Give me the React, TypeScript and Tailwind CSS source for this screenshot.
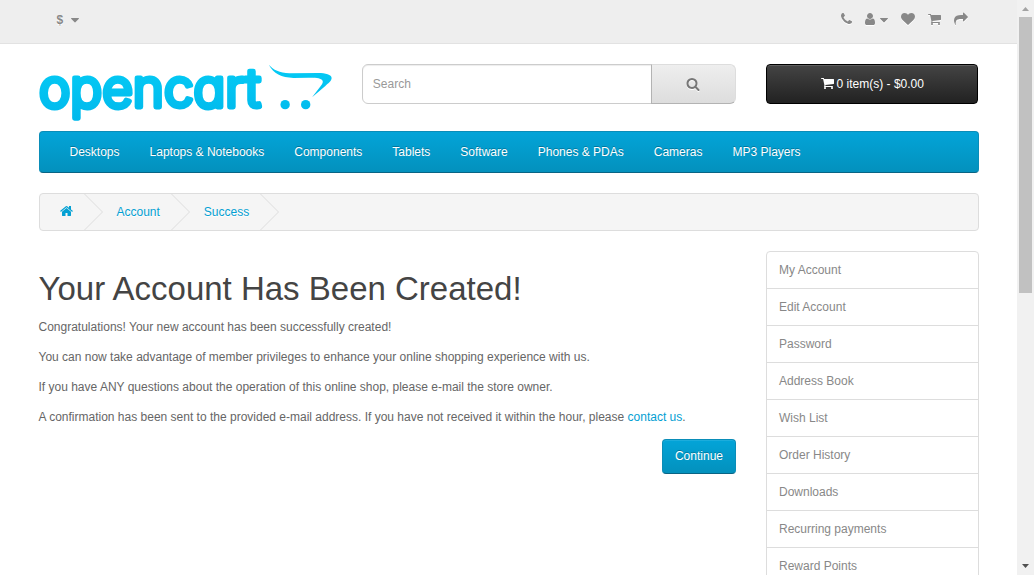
import type { ReactNode } from "react";

type IconProps = { d: string; viewBox: string; className: string };

function Icon({ d, viewBox, className }: IconProps) {
  return (
    <svg viewBox={viewBox} className={`fill-current ${className}`} aria-hidden="true">
      <path d={d} />
    </svg>
  );
}

const paths = {
  phone:
    "M1600 1240q0 27-10 70.5t-21 68.5q-21 50-122 106-94 51-186 51-27 0-53-3.5t-57.5-12.5-47-14.5-55.5-20.5-49-18q-98-35-175-83-127-79-264-216t-216-264q-48-77-83-175-3-9-18-49t-20.5-55.5-14.5-47-12.5-57.5-3.5-53q0-92 51-186 56-101 106-122 25-11 68.5-21t70.5-10q14 0 21 3 18 6 53 76 11 19 30 54t35 63.5 31 53.5q3 4 17.5 25t21.5 35.5 7 28.5q0 20-28.5 50t-62 55-62 53-28.5 46q0 9 5 22.5t8.5 20.5 14 24 11.5 19q76 137 174 235t235 174q2 1 19 11.5t24 14 20.5 8.5 22.5 5q18 0 46-28.5t53-62 55-62 50-28.5q14 0 28.5 7t35.5 21.5 25 17.5q25 15 53.5 31t63.5 35 54 30q70 35 76 53 3 7 3 21z",
  user: "M1536 1399q0 109-62.5 187t-150.5 78h-854q-88 0-150.5-78t-62.5-187q0-85 8.5-160.5t31.5-152 58.5-131 94-89 134.5-34.5q131 128 313 128t313-128q76 0 134.5 34.5t94 89 58.5 131 31.5 152 8.5 160.5zm-256-887q0 159-112.5 271.5t-271.5 112.5-271.5-112.5-112.5-271.5 112.5-271.5 271.5-112.5 271.5 112.5 112.5 271.5z",
  caret:
    "M1408 704q0 26-19 45l-448 448q-19 19-45 19t-45-19l-448-448q-19-19-19-45t19-45 45-19h896q26 0 45 19t19 45z",
  heart:
    "M896 1664q-26 0-44-18l-624-602q-10-8-27.5-26t-55.5-65.5-68-97.5-53.5-121-23.5-138q0-220 127-344t351-124q62 0 126.5 21.5t120 58 95.5 68.5 76 68q36-36 76-68t95.5-68.5 120-58 126.5-21.5q224 0 351 124t127 344q0 221-229 450l-623 600q-18 18-44 18z",
  cart: "M704 1536q0 52-38 90t-90 38-90-38-38-90 38-90 90-38 90 38 38 90zm896 0q0 52-38 90t-90 38-90-38-38-90 38-90 90-38 90 38 38 90zm128-1088v512q0 24-16.5 42.5t-40.5 21.5l-1044 122q13 60 13 70 0 16-24 64h920q26 0 45 19t19 45-19 45-45 19h-1024q-26 0-45-19t-19-45q0-11 8-31.5t16-36 21.5-40 15.5-29.5l-177-823h-204q-26 0-45-19t-19-45 19-45 45-19h256q16 0 28.5 6.5t19.5 15.5 13 24.5 8 26 5.5 29.5 4.5 26h1201q26 0 45 19t19 45z",
  share:
    "M1792 640q0 26-19 45l-512 512q-19 19-45 19t-45-19-19-45v-256h-224q-98 0-175.5 6t-154 21.5-133 42.5-105.5 69.5-80 101-48.5 138.5-17.5 181q0 55 5 123 0 6 2.5 23.5t2.5 26.5q0 15-8.5 25t-23.5 10q-16 0-28-17-7-9-13-22t-13.5-30-10.5-24q-127-285-127-451 0-199 53-333 162-403 875-403h224v-256q0-26 19-45t45-19 45 19l512 512q19 19 19 45z",
  search:
    "M1216 832q0-185-131.5-316.5t-316.5-131.5-316.5 131.5-131.5 316.5 131.5 316.5 316.5 131.5 316.5-131.5 131.5-316.5zm512 832q0 52-38 90t-90 38q-54 0-90-38l-343-342q-179 124-399 124-143 0-273.5-55.5t-225-150-150-225-55.5-273.5 55.5-273.5 150-225 225-150 273.5-55.5 273.5 55.5 225 150 150 225 55.5 273.5q0 220-124 399l343 343q37 37 37 90z",
  home: "M1472 992v480q0 26-19 45t-45 19h-384v-384h-256v384h-384q-26 0-45-19t-19-45v-480q0-1 .5-3t.5-3l575-474 575 474q1 2 1 6zm223-69l-62 74q-8 9-21 11h-3q-13 0-21-7l-692-577-692 577q-12 8-24 7-13-2-21-11l-62-74q-8-10-7-23.5t11-21.5l719-599q32-26 76-26t76 26l244 204v-195q0-14 9-23t23-9h192q14 0 23 9t9 23v408l219 182q10 8 11 21.5t-7 23.5z",
};

const categories = [
  "Desktops",
  "Laptops & Notebooks",
  "Components",
  "Tablets",
  "Software",
  "Phones & PDAs",
  "Cameras",
  "MP3 Players",
];

const accountLinks = [
  "My Account",
  "Edit Account",
  "Password",
  "Address Book",
  "Wish List",
  "Order History",
  "Downloads",
  "Recurring payments",
  "Reward Points",
];

function Container({ children, className = "" }: { children: ReactNode; className?: string }) {
  return <div className={`mx-auto w-full max-w-[970px] px-[15px] ${className}`}>{children}</div>;
}

function Logo() {
  return (
    <svg
      viewBox="0 0 294 58"
      className="block h-[58px] w-full max-w-[294px] overflow-visible"
      role="img"
      aria-label="opencart"
    >
      <defs>
        <linearGradient id="logo-fill" x1="0" y1="0" x2="0" y2="58" gradientUnits="userSpaceOnUse">
          <stop offset="0" stopColor="#05cbf5" />
          <stop offset="1" stopColor="#00b8ec" />
        </linearGradient>
      </defs>
      <g fill="url(#logo-fill)">
        <text
          x="0"
          y="43"
          stroke="url(#logo-fill)"
          strokeWidth="5"
          strokeLinejoin="round"
          className="font-['Inter',sans-serif] text-[53px] font-light [font-feature-settings:'cv11'] [font-optical-sizing:none]"
        >
          opencart
        </text>
        <path d="M230.3 .7C235 6 241 8.700 251 9.200L280 9C287 9 293.300 10.500 293.300 14C293.300 17 289.500 19.500 287 22L273.700 33.300L282 22.500C284 20 285.500 17.500 283.500 15.700C281.500 13.900 277 13.700 270 13.700L255 13.900C243 13.500 235 9.500 230.300 .7Z" />
        <circle cx="246.700" cy="40.700" r="4.700" />
        <circle cx="267.300" cy="40.700" r="4.700" />
      </g>
    </svg>
  );
}

function Chevron() {
  return (
    <svg viewBox="0 0 19 36" className="ml-[11px] mr-[14px] h-9 w-[19px] fill-none stroke-[#ddd]" aria-hidden="true">
      <path d="M.5 0L18.500 18L.5 36" />
    </svg>
  );
}

export default function App() {
  return (
    <div className="flex h-screen overflow-hidden bg-white font-['Liberation_Sans',Arial,sans-serif] text-[12px] leading-5 text-[#666]">
      <div className="min-w-0 flex-1 overflow-hidden">
        <nav className="mb-5 border-b border-[#e2e2e2] bg-[#eee]" aria-label="Top">
          <Container className="flex h-[43px] items-center justify-between pb-1 text-[#888]">
            <button className="ml-[18px] flex items-center gap-2 font-bold [text-shadow:0_1px_0_#fff]">
              <span>$</span>
              <Icon d={paths.caret} viewBox="384 0 1024 1792" className="h-[14px] w-2" />
            </button>
            <div className="mr-[11px] flex items-center gap-[13px] pb-[2px] [filter:drop-shadow(0_1px_0_#fff)]">
              <a href="#contact" aria-label="Contact">
                <Icon d={paths.phone} viewBox="192 0 1408 1792" className="h-[14px] w-[11px]" />
              </a>
              <button className="flex items-center gap-[5px]" aria-label="My Account">
                <Icon d={paths.user} viewBox="256 0 1280 1792" className="h-[14px] w-[10px]" />
                <Icon d={paths.caret} viewBox="384 0 1024 1792" className="mt-[2px] h-[14px] w-2" />
              </button>
              <a href="#wishlist" aria-label="Wish List">
                <Icon d={paths.heart} viewBox="0 0 1792 1792" className="size-[14px]" />
              </a>
              <a href="#cart" aria-label="Shopping Cart">
                <Icon d={paths.cart} viewBox="64 0 1664 1792" className="h-[14px] w-[13px]" />
              </a>
              <a href="#checkout" aria-label="Checkout">
                <Icon d={paths.share} viewBox="0 0 1792 1792" className="size-[14px]" />
              </a>
            </div>
          </Container>
        </nav>

        <Container>
          <header className="mb-[9px] grid grid-cols-12 items-start gap-x-[30px]">
            <a href="#home" className="col-span-4">
              <Logo />
            </a>
            <form className="col-span-5 flex h-10" onSubmit={(e) => e.preventDefault()}>
              <input
                type="text"
                aria-label="Search"
                placeholder="Search"
                className="min-w-0 flex-1 rounded-l-md border border-[#ccc] px-[10px] text-[12px] text-[#555] shadow-[inset_0_1px_1px_rgba(0,0,0,0.075)] outline-none placeholder:text-[#999]"
              />
              <button
                aria-label="Submit search"
                className="-ml-px flex w-[85px] items-center justify-center rounded-r-md border border-[#ddd] border-b-[#b3b3b3] border-l-[#b3b3b3] bg-linear-to-b from-[#eee] to-[#ddd] text-[#777]"
              >
                <Icon d={paths.search} viewBox="0 0 1792 1792" className="size-[14px] [filter:drop-shadow(0_1px_0_#fff)]" />
              </button>
            </form>
            <button className="col-span-3 flex h-10 items-center justify-center gap-[3px] rounded border border-black bg-linear-to-b from-[#444] to-[#222] text-white shadow-[inset_0_1px_0_rgba(255,255,255,0.15)]">
              <Icon d={paths.cart} viewBox="64 0 1664 1792" className="mb-[2px] h-[14px] w-[13px]" />
              <span>0 item(s) - $0.00</span>
            </button>
          </header>

          <nav
            aria-label="Categories"
            className="mb-5 flex rounded border border-[#0a8db8] border-b-[#096484] bg-linear-to-b from-[#03a4d8] to-[#0391bd] px-[15px]"
          >
            {categories.map((name) => (
              <a
                key={name}
                href="#category"
                className="whitespace-nowrap px-[15px] py-[10px] text-white [text-shadow:0_-1px_0_rgba(0,0,0,0.25)]"
              >
                {name}
              </a>
            ))}
          </nav>

          <nav
            aria-label="Breadcrumb"
            className="mb-5 flex items-center rounded border border-[#ddd] bg-[#f5f5f5] pl-5 text-[#03a0d3] [text-shadow:0_1px_0_#fff]"
          >
            <a href="#home" aria-label="Home" className="pb-[2px]">
              <Icon d={paths.home} viewBox="64 0 1664 1792" className="h-[14px] w-[13px]" />
            </a>
            <Chevron />
            <a href="#account">Account</a>
            <Chevron />
            <a href="#success">Success</a>
            <Chevron />
          </nav>

          <div className="grid grid-cols-12 items-start gap-x-[30px]">
            <main className="col-span-9">
              <h1 className="mb-[10px] mt-5 text-[33px] leading-9 text-[#444]">Your Account Has Been Created!</h1>
              <div className="flex flex-col gap-[10px]">
                <p>Congratulations! Your new account has been successfully created!</p>
                <p>You can now take advantage of member privileges to enhance your online shopping experience with us.</p>
                <p>If you have ANY questions about the operation of this online shop, please e-mail the store owner.</p>
                <p>
                  A confirmation has been sent to the provided e-mail address. If you have not received it within the
                  hour, please{" "}
                  <a href="#contact" className="text-[#03a0d3]">
                    contact us
                  </a>
                  .
                </p>
              </div>
              <div className="mt-3 flex justify-end">
                <a
                  href="#continue"
                  className="rounded border border-[#0a8db8] border-b-[#096484] bg-linear-to-b from-[#03a4d8] to-[#0391bd] px-3 py-[6px] leading-[21px] text-white shadow-[inset_0_1px_0_rgba(255,255,255,0.1)] [text-shadow:0_-1px_0_rgba(0,0,0,0.25)]"
                >
                  Continue
                </a>
              </div>
            </main>
            <aside className="col-span-3 divide-y divide-[#ddd] rounded border border-[#ddd]">
              {accountLinks.map((name) => (
                <a key={name} href="#account" className="block px-3 py-2 text-[#888]">
                  {name}
                </a>
              ))}
            </aside>
          </div>
        </Container>
      </div>

      <div className="flex w-[17px] shrink-0 flex-col items-center justify-between bg-[#f1f1f1]" aria-hidden="true">
        <svg viewBox="0 0 17 17" className="size-[17px] fill-[#a3a3a3]">
          <path d="M5 11L8.500 7L12 11Z" />
        </svg>
        <div className="flex w-full flex-1 flex-col px-[2px]">
          <div className="h-[51%] bg-[#c1c1c1]" />
        </div>
        <svg viewBox="0 0 17 17" className="size-[17px] fill-[#505050]">
          <path d="M5 6L12 6L8.500 10Z" />
        </svg>
      </div>
    </div>
  );
}
